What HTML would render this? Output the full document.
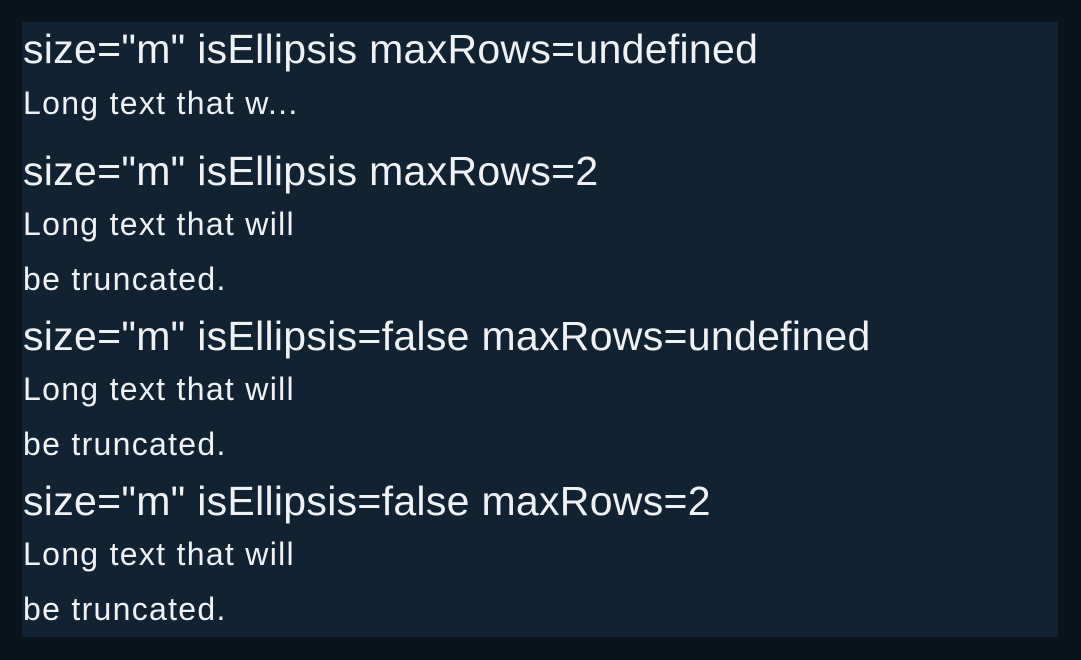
<!DOCTYPE html>
<html><head><style>
html,body{margin:0;padding:0;background:#0a141d;width:1081px;height:660px;overflow:hidden}
.p{position:absolute;left:22px;top:22px;width:1036px;height:615px;background:#112233}
.t{position:absolute;left:23px;color:#eef2f5;font-family:"Liberation Sans",sans-serif;white-space:nowrap}
.h{font-size:41px;line-height:50px;letter-spacing:0.3px}
.b{font-size:32px;line-height:40px;letter-spacing:1.3px}
</style></head><body>
<div class="p"></div>
<div class="t h" style="top:24px">size="m" isEllipsis maxRows=undefined</div>
<div class="t b" style="top:83px">Long text that w...</div>
<div class="t h" style="top:146px">size="m" isEllipsis maxRows=2</div>
<div class="t b" style="top:204px">Long text that will</div>
<div class="t b" style="top:259px">be truncated.</div>
<div class="t h" style="top:311px">size="m" isEllipsis=false maxRows=undefined</div>
<div class="t b" style="top:369px">Long text that will</div>
<div class="t b" style="top:424px">be truncated.</div>
<div class="t h" style="top:476px">size="m" isEllipsis=false maxRows=2</div>
<div class="t b" style="top:534px">Long text that will</div>
<div class="t b" style="top:589px">be truncated.</div>
</body></html>
